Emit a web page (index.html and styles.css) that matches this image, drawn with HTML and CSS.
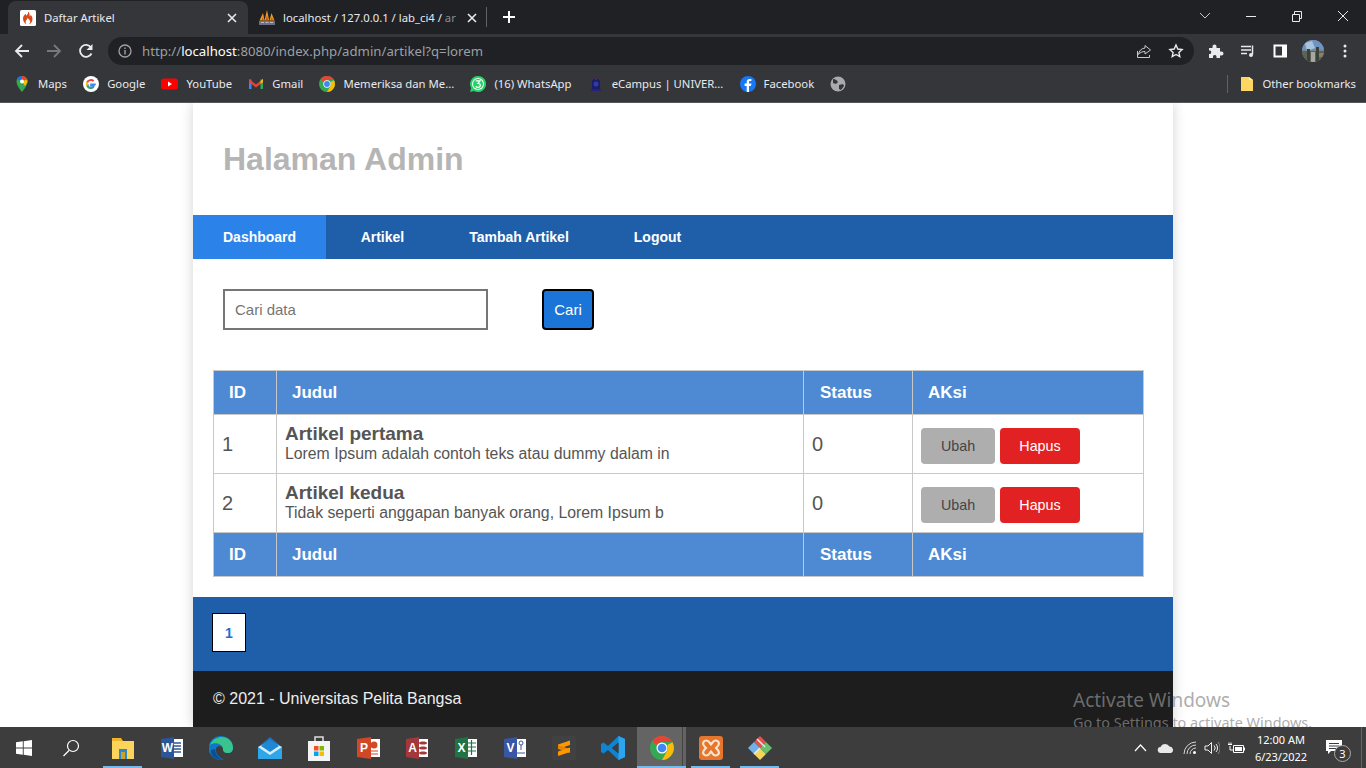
FILE: index.html
```html
<!DOCTYPE html>
<html lang="en">
<head>
<meta charset="utf-8">
<title>Daftar Artikel</title>
<link rel="stylesheet" href="styles.css">
</head>
<body>
<div class="screen">
  <div class="tabstrip">
    <div class="tab tab-active">
      <svg class="fav" width="16" height="16" viewBox="0 0 16 16"><rect width="16" height="16" rx="1.5" fill="#fff"/><path d="M8 1.500c.6 2.200-1 3-1.700 4.300-.3-.7-.5-1.200-.4-2C4 5 3 6.700 3 8.800 3 11.700 5 14 7 14.500c-1.200-1-1.700-2.300-1.200-3.500.4-.9 1.500-1.500 1.800-3 1 .8 2.700 2.300 2.600 3.800-.1 1.200-.7 2-1.500 2.700 2.200-.6 3.800-2.600 3.800-5.200 0-2-1-3.600-2-4.500 0 .9-.3 1.500-.9 1.800C9.800 4.500 9.500 2.800 8 1.500z" fill="#d8491c"/></svg>
      <span class="tab-title">Daftar Artikel</span>
      <svg class="tab-x" width="10" height="10" viewBox="0 0 10 10"><path d="M1 1l8 8M9 1l-8 8" stroke="#e8eaed" stroke-width="1.600"/></svg>
    </div>
    <div class="tab tab-idle">
      <svg class="fav" width="18" height="16" viewBox="0 0 18 16"><path d="M1.500 10.500 5 3l1.500 7.500zM6.500 10.500 9 0l2.200 10.500zM11.500 10.500 13.500 3l3 7.500z" fill="#f29a1f"/><path d="M7.800 10.500 9 5l1 5.500zM3.500 10.500 5 7l.6 3.500zM12.800 10.500 13.800 7l1.200 3.500z" fill="#b9500f"/><path d="M1 11h16v4H1z" fill="#6c7086"/><path d="M3 12.500h3M7.500 12.500h3M12 12.500h3" stroke="#b9bccb"/></svg>
      <span class="tab-title">localhost / 127.0.0.1 / lab_ci4 / <span class="tab-fade">ar</span></span>
      <svg class="tab-x" width="10" height="10" viewBox="0 0 10 10"><path d="M1 1l8 8M9 1l-8 8" stroke="#e8eaed" stroke-width="1.600"/></svg>
    </div>
    <span class="tab-sep"></span>
    <svg class="new-tab" width="14" height="14" viewBox="0 0 14 14"><path d="M7 1v12M1 7h12" stroke="#fff" stroke-width="2"/></svg>
    <div class="win-ctrls">
      <svg width="46" height="14" viewBox="0 0 46 14"><path d="M18 4l5 5 5-5" fill="none" stroke="#c8c9cb"/></svg>
      <svg width="46" height="14" viewBox="0 0 46 14"><path d="M18 7.500h10" stroke="#e8eaed"/></svg>
      <svg width="46" height="14" viewBox="0 0 46 14"><path d="M18.500 5.500h7v7h-7zM20.500 5.500v-3h7v7h-2" fill="none" stroke="#e8eaed"/></svg>
      <svg width="46" height="14" viewBox="0 0 46 14"><path d="M18 2l10 10M28 2L18 12" stroke="#e8eaed"/></svg>
    </div>
  </div>

  <div class="toolbar">
    <svg class="tool-btn" width="16" height="16" viewBox="0 0 16 16"><path d="M15 8H2M8 2 2 8l6 6" fill="none" stroke="#e8eaed" stroke-width="1.800"/></svg>
    <svg class="tool-btn" width="16" height="16" viewBox="0 0 16 16"><path d="M1 8h13M8 2l6 6-6 6" fill="none" stroke="#77787b" stroke-width="1.800"/></svg>
    <svg class="tool-btn" width="16" height="16" viewBox="0 0 16 16"><path d="M13.500 10.500A6 6 0 1 1 13 4.500" fill="none" stroke="#e8eaed" stroke-width="1.800"/><path d="M14.500 1v6h-6z" fill="#e8eaed"/></svg>
    <div class="omnibox">
      <svg class="info" width="14" height="14" viewBox="0 0 14 14"><circle cx="7" cy="7" r="6" fill="none" stroke="#a0a2a5" stroke-width="1.300"/><path d="M7 6v4.500M7 3.500v1.500" stroke="#a0a2a5" stroke-width="1.400"/></svg>
      <span class="url">http://<b class="url-host">localhost</b>:8080/index.php/admin/artikel?q=lorem</span>
      <svg class="omni-icon" width="16" height="16" viewBox="0 0 16 16"><path d="M9 2.500 14.500 7 9 11V8.500C6 8.500 4 9.500 2.500 11.500 3 8 5 5.500 9 5z" fill="none" stroke="#c8c9cb"/><path d="M1.500 8v6.500h12V12" fill="none" stroke="#c8c9cb"/></svg>
      <svg class="omni-icon" width="16" height="16" viewBox="0 0 16 16"><path d="M8 2l1.800 4 4.300.5-3.200 2.900.9 4.300L8 11.500l-3.800 2.200.9-4.300-3.200-2.900L6.200 6z" fill="none" stroke="#e8eaed" stroke-width="1.400"/></svg>
    </div>
    <svg class="tool-btn ext" width="16" height="16" viewBox="0 0 16 16"><path d="M1 5h3.500V3.500a2 2 0 0 1 4 0V5H12v3.500h1.500a2 2 0 0 1 0 4H12V15H8.500v-1.500a1.800 1.800 0 0 0-3.500 0V15H1v-4h1.200a2 2 0 0 0 0-3.500H1z" fill="#e8eaed"/></svg>
    <svg class="tool-btn" width="16" height="16" viewBox="0 0 16 16"><path d="M1 3.500h10M1 7h10M1 10.500h6" stroke="#e8eaed" stroke-width="1.400"/><path d="M12.500 2.500v9" stroke="#e8eaed" stroke-width="1.500"/><circle cx="11" cy="12" r="2" fill="#e8eaed"/></svg>
    <svg class="tool-btn" width="16" height="16" viewBox="0 0 16 16"><path d="M1.500 1.500h13.500v13H1.500z" fill="#fff"/><path d="M3.500 3.500h6.500v9H3.500z" fill="#35363a"/></svg>
    <svg class="tool-btn avatar" width="22" height="22" viewBox="0 0 22 22"><defs><clipPath id="round"><circle cx="11" cy="11" r="11"/></clipPath></defs><g clip-path="url(#round)"><path d="M0 0h22v22H0z" fill="#7b8a90"/><path d="M0 0h22v9H0z" fill="#6f94c4"/><path d="M3 3l7-2 3 7-8 3z" fill="#a9c4de"/><path d="M0 11h22v11H0z" fill="#5b6257"/><path d="M5 9h3v13H5zM14 7h3v15h-3z" fill="#3b4038"/><path d="M9 12h4v10H9z" fill="#a7a8a0"/><path d="M17 13h5v4h-5z" fill="#8b7f6c"/></g></svg>
    <svg class="tool-btn menu" width="16" height="16" viewBox="0 0 16 16"><circle cx="8" cy="3" r="1.500" fill="#e8eaed"/><circle cx="8" cy="8" r="1.500" fill="#e8eaed"/><circle cx="8" cy="13" r="1.500" fill="#e8eaed"/></svg>
  </div>

  <div class="bookmarks">
    <a class="bm"><svg width="16" height="16" viewBox="0 0 16 16"><path d="M8 0a5.500 5.500 0 0 0-5.500 5.500C2.500 10 8 16 8 16s5.500-6 5.500-10.500A5.500 5.500 0 0 0 8 0z" fill="#34a853"/><path d="M3 3.200A5.500 5.500 0 0 1 8 0v5.500z" fill="#1a73e8"/><path d="M8 0a5.500 5.500 0 0 1 5 3.200L8 5.500z" fill="#ea4335"/><path d="M13.200 3.500 13.500 6 11 10 8 5.500z" fill="#fbbc04"/><circle cx="8" cy="5.500" r="2" fill="#fff"/></svg><span class="bm-text">Maps</span></a>
    <a class="bm"><svg width="16" height="16" viewBox="0 0 16 16"><circle cx="8" cy="8" r="8" fill="#fff"/><path d="M12.800 8.300H8v1.600h2.800A3.100 3.100 0 0 1 4.900 8" fill="none" stroke="#4285f4" stroke-width="1.700"/><path d="M4.900 8c0 .4.100.8.200 1.100l-1.600 1.300A5 5 0 0 1 3 8z" fill="#34a853"/><path d="M5.100 9.200a3.100 3.100 0 0 0 4.900 1.200l1.400 1.100A5 5 0 0 1 3.500 10.400z" fill="#34a853"/><path d="M3.500 5.600 5.100 6.900A3.100 3.100 0 0 0 5 9L3.500 10.400a5 5 0 0 1 0-4.800z" fill="#fbbc05"/><path d="M3.500 5.600A5 5 0 0 1 11.300 4.500L10 5.800A3.100 3.100 0 0 0 5.100 6.900z" fill="#ea4335"/></svg><span class="bm-text">Google</span></a>
    <a class="bm"><svg width="17" height="16" viewBox="0 0 17 16"><rect x="0" y="2.500" width="17" height="11" rx="3" fill="#f00"/><path d="M7 5.500 11 8l-4 2.500z" fill="#fff"/></svg><span class="bm-text">YouTube</span></a>
    <a class="bm"><svg width="16" height="16" viewBox="0 0 16 16"><path d="M1 3.500h2.500V13H1z" fill="#4285f4"/><path d="M12.500 3.500H15V13h-2.500z" fill="#34a853"/><path d="M1 3 8 8.500 15 3v3L8 11.500 1 6z" fill="#ea4335"/><path d="M12.500 5 15 3v3l-2.500 2z" fill="#fbbc04"/></svg><span class="bm-text">Gmail</span></a>
    <a class="bm"><svg width="16" height="16" viewBox="0 0 16 16"><circle cx="8" cy="8" r="8" fill="#34a853"/><path d="M8 0a8 8 0 0 1 6.900 4H8a4 4 0 0 0-3.500 2L1.500 3.300A8 8 0 0 1 8 0z" fill="#ea4335"/><path d="M15 4.200A8 8 0 0 1 8 16l3.400-6A4 4 0 0 0 11.500 6z" fill="#fbbc05"/><circle cx="8" cy="8" r="3.700" fill="#fff"/><circle cx="8" cy="8" r="2.900" fill="#4285f4"/></svg><span class="bm-text">Memeriksa dan Me...</span></a>
    <a class="bm"><svg width="16" height="16" viewBox="0 0 16 16"><path d="M8 0a8 8 0 0 0-6.800 12.100L0 16l4-1.100A8 8 0 1 0 8 0z" fill="#25d366"/><circle cx="8" cy="8" r="6" fill="#fff"/><circle cx="8" cy="8" r="5" fill="#25d366"/><path d="M5.800 4.800h4.200L8 7.500c1.500 0 2.300.7 2.300 1.800 0 1.200-1 2-2.300 2-1 0-1.800-.4-2.300-1" fill="none" stroke="#fff" stroke-width="1.200"/></svg><span class="bm-text">(16) WhatsApp</span></a>
    <a class="bm"><svg width="16" height="16" viewBox="0 0 16 16"><path d="M8 1 4 5v9h8V5z" fill="#1c1c6b"/><circle cx="8" cy="8" r="2.500" fill="#2c3fa0"/><path d="M7 3.500 8 1.500l1 2z" fill="#b03030"/><path d="M3 13h10v2H3z" fill="#23237c"/></svg><span class="bm-text">eCampus | UNIVER...</span></a>
    <a class="bm"><svg width="16" height="16" viewBox="0 0 16 16"><circle cx="8" cy="8" r="8" fill="#1877f2"/><path d="M9 16v-6h2l.4-2.400H9V6.200c0-.8.300-1.200 1.200-1.200h1.200V3a9 9 0 0 0-1.700-.1C7.800 2.900 6.700 4 6.700 6v1.600H4.600V10h2.100v6z" fill="#fff"/></svg><span class="bm-text">Facebook</span></a>
    <a class="bm"><svg width="16" height="16" viewBox="0 0 16 16"><circle cx="8" cy="8" r="7.500" fill="#a8aaad"/><path d="M3 3c2 0 4 1 5 3L6 8 3 7zM9 9l4-1 1 2-3 4-2-1z" fill="#35363a"/></svg></a>
    <span class="bm-spacer"></span>
    <span class="bm-sep"></span>
    <a class="bm"><svg width="14" height="16" viewBox="0 0 14 16"><path d="M1 1h8l4 3v11H1z" fill="#fdd663"/><path d="M9 1v3h4z" fill="#fbeeb8"/></svg><span class="bm-text">Other bookmarks</span></a>
  </div>

  <div class="viewport">
    <div class="wrap">
      <header class="site-head"><h1 class="site-title">Halaman Admin</h1></header>
      <nav class="site-nav">
        <a class="nav-link nav-active">Dashboard</a>
        <a class="nav-link">Artikel</a>
        <a class="nav-link">Tambah Artikel</a>
        <a class="nav-link">Logout</a>
      </nav>
      <main class="content">
        <form class="search">
          <input class="search-input" type="text" placeholder="Cari data">
          <button class="search-btn" type="button">Cari</button>
        </form>
        <table class="grid">
          <thead>
            <tr><th class="c-id">ID</th><th class="c-title">Judul</th><th class="c-status">Status</th><th class="c-act">AKsi</th></tr>
          </thead>
          <tbody>
            <tr>
              <td>1</td>
              <td class="cell-title"><b class="art-name">Artikel pertama</b><p class="art-text">Lorem Ipsum adalah contoh teks atau dummy dalam in</p></td>
              <td>0</td>
              <td class="cell-act"><a class="btn btn-grey">Ubah</a><a class="btn btn-red">Hapus</a></td>
            </tr>
            <tr>
              <td>2</td>
              <td class="cell-title"><b class="art-name">Artikel kedua</b><p class="art-text">Tidak seperti anggapan banyak orang, Lorem Ipsum b</p></td>
              <td>0</td>
              <td class="cell-act"><a class="btn btn-grey">Ubah</a><a class="btn btn-red">Hapus</a></td>
            </tr>
          </tbody>
          <tfoot>
            <tr><th>ID</th><th class="c-title">Judul</th><th class="c-status">Status</th><th class="c-act">AKsi</th></tr>
          </tfoot>
        </table>
      </main>
      <div class="pager-band"><a class="page-box">1</a></div>
      <footer class="site-foot">© 2021 - Universitas Pelita Bangsa</footer>
    </div>
    <div class="activate">
      <div class="act-1">Activate Windows</div>
      <div class="act-2">Go to Settings to activate Windows.</div>
    </div>
  </div>

  <div class="taskbar">
    <div class="tb-start">
      <svg width="16" height="16" viewBox="0 0 16 16"><path d="M0 2.300 6.800 1.300V7.500H0zM7.700 1.200 16 0V7.500H7.700zM0 8.400H6.800V14.700L0 13.700zM7.700 8.400H16V16L7.700 14.800z" fill="#fff"/></svg>
    </div>
    <div class="tb-search">
      <svg width="18" height="18" viewBox="0 0 18 18"><circle cx="11" cy="7" r="5.500" fill="none" stroke="#fff" stroke-width="1.200"/><path d="M7 11.500 1.500 17" stroke="#fff" stroke-width="1.300"/></svg>
    </div>
    <div class="tb-apps">
      <div class="tb-app tb-on"><svg width="24" height="22" viewBox="0 0 24 22"><path d="M1 1h9l2 3H1z" fill="#f0b429"/><path d="M1 4h22v18H1z" fill="#fcd35b"/><path d="M8 12h8v10H8z" fill="#2b88c9"/><path d="M10 15h4v7h-4z" fill="#c9a227"/></svg></div>
      <div class="tb-app"><svg width="24" height="24" viewBox="0 0 24 24"><rect x="11" y="3" width="12" height="18" fill="#fff"/><path d="M13 7h8M13 10h8M13 13h8M13 16h8" stroke="#2b579a" stroke-width="1.300"/><path d="M1 3l13-2v22L1 21z" fill="#2b579a"/><text class="tb-letter" x="7.500" y="16">W</text></svg></div>
      <div class="tb-app"><svg width="24" height="24" viewBox="0 0 24 24"><path d="M12 0a12 12 0 0 1 12 12c0 3-2 5-5 5-4 0-5-2-5-4 0-3-4-4-6-2C5 14 8 21 15 23.500A12 12 0 1 1 12 0z" fill="#0c78c8"/><path d="M1 9C3 3 9 1 13 1c6 0 11 4 11 11 0 3-2 5-5 5-3 0-5-1-5-4 0-5-8-8-13-4z" fill="#38c48c"/><path d="M2 14C1 20 7 24 14 24c-4-2-8-6-8-11z" fill="#0a4f95"/></svg></div>
      <div class="tb-app"><svg width="24" height="24" viewBox="0 0 24 24"><path d="M12 1 0 11v12h24V11z" fill="#1e6fb8"/><path d="M0 11h24v12H0z" fill="#2ea7ea"/><path d="M0 11l12 8 12-8-12-6z" fill="#d4eefc"/><path d="M3 10 12 3l9 7-9 6z" fill="#1e88d4"/></svg></div>
      <div class="tb-app"><svg width="24" height="26" viewBox="0 0 24 26"><path d="M8 6V2h8v4" fill="none" stroke="#ddd" stroke-width="1.500"/><path d="M1 6h22v20H1z" fill="#f4f4f4"/><path d="M7 11h4.500v4.500H7z" fill="#f25022"/><path d="M12.500 11H17v4.500h-4.500z" fill="#7fba00"/><path d="M7 16.500h4.500V21H7z" fill="#00a4ef"/><path d="M12.500 16.500H17V21h-4.500z" fill="#ffb900"/></svg></div>
      <div class="tb-app"><svg width="24" height="24" viewBox="0 0 24 24"><rect x="12" y="3" width="12" height="18" fill="#fff"/><circle cx="18" cy="9" r="3.500" fill="#d24726"/><path d="M14 15h8M14 18h8" stroke="#d24726"/><path d="M1 3l14-2v22L1 21z" fill="#d24726"/><text class="tb-letter" x="8" y="16">P</text></svg></div>
      <div class="tb-app"><svg width="24" height="24" viewBox="0 0 24 24"><rect x="11" y="3" width="12" height="18" fill="#fff"/><path d="M14 7c0-2 8-2 8 0s-8 2-8 0zM14 12c0-2 8-2 8 0s-8 2-8 0zM14 17c0-2 8-2 8 0s-8 2-8 0z" fill="#a4373a"/><path d="M1 3l13-2v22L1 21z" fill="#a4373a"/><text class="tb-letter" x="7.500" y="16">A</text></svg></div>
      <div class="tb-app"><svg width="24" height="24" viewBox="0 0 24 24"><rect x="11" y="3" width="12" height="18" fill="#fff"/><path d="M13 7h9M13 11h9M13 15h9M17.500 4v15" stroke="#217346" stroke-width="1.200"/><path d="M1 3l13-2v22L1 21z" fill="#217346"/><text class="tb-letter" x="7.500" y="16">X</text></svg></div>
      <div class="tb-app"><svg width="24" height="24" viewBox="0 0 24 24"><rect x="11" y="3" width="12" height="18" fill="#fff"/><circle cx="18" cy="7" r="2" fill="none" stroke="#3955a3"/><path d="M18 9v5M14 17h8" stroke="#3955a3"/><path d="M1 3l13-2v22L1 21z" fill="#3955a3"/><text class="tb-letter" x="7.500" y="16">V</text></svg></div>
      <div class="tb-app"><svg width="24" height="24" viewBox="0 0 24 24"><rect width="24" height="24" rx="2" fill="#414141"/><path d="M6 8.500 18 4.500v4.500L6 13z" fill="#ff9800"/><path d="M6 9 18 13v4L6 13z" fill="#e58600"/><path d="M6 15.500 18 11.500V16L6 20z" fill="#ff9800"/></svg></div>
      <div class="tb-app"><svg width="24" height="24" viewBox="0 0 24 24"><path d="M17.500 0 24 3v18l-6.500 3L7 14 2.500 17.500 0 16V8l2.500-1.500L7 10zM17.500 6.500 11 12l6.500 5.500z" fill="#0e85d4"/><path d="M17.500 0 24 3v18l-6.500 3z" fill="#2ba5ef"/><path d="M17.500 6.500V17.500L11 12z" fill="#3d3d3d"/></svg></div>
      <div class="tb-app tb-on tb-cur"><svg width="24" height="24" viewBox="0 0 16 16"><circle cx="8" cy="8" r="8" fill="#34a853"/><path d="M8 0a8 8 0 0 1 6.900 4H8a4 4 0 0 0-3.500 2L1.500 3.300A8 8 0 0 1 8 0z" fill="#ea4335"/><path d="M15 4.200A8 8 0 0 1 8 16l3.400-6A4 4 0 0 0 11.500 6z" fill="#fbbc05"/><circle cx="8" cy="8" r="3.700" fill="#fff"/><circle cx="8" cy="8" r="2.900" fill="#4285f4"/></svg></div>
      <div class="tb-app tb-on"><svg width="24" height="24" viewBox="0 0 24 24"><rect width="24" height="24" rx="3" fill="#e5762c"/><path d="M7.500 4.500c-3 0-4 2.500-3 4.500 1 1.500 2.500 3 2.500 3s-1.500 1.500-2.500 3c-1 2 0 4.500 3 4.500 2.500 0 3-2.500 4.500-4 1.500 1.500 2 4 4.500 4 3 0 4-2.500 3-4.500-1-1.500-2.500-3-2.500-3s1.500-1.500 2.500-3c1-2 0-4.500-3-4.500-2.500 0-3 2.500-4.500 4-1.500-1.500-2-4-4.500-4z" fill="none" stroke="#fbe3cd" stroke-width="2.200"/></svg></div>
      <div class="tb-app tb-on"><svg width="24" height="24" viewBox="0 0 24 24"><path d="M12 12 6 18l6 6 6-6z" fill="#f2d75b"/><path d="M12 0 6 6l6 6 6-6z" fill="#e0534f"/><path d="M0 12l6-6 6 6-6 6z" fill="#6fb1e8"/><path d="M12 12l6-6 6 6-6 6z" fill="#6abf69"/><path d="M9 3l8 8M6 18l6-6" stroke="#e8e8e8" stroke-width="1.500"/></svg></div>
    </div>
    <div class="tray">
      <svg class="tr-ic tr-chev" width="13" height="8" viewBox="0 0 13 8"><path d="M1 7l5.500-6L12 7" fill="none" stroke="#fff" stroke-width="1.200"/></svg>
      <svg class="tr-ic tr-cloud" width="17" height="10" viewBox="0 0 17 10"><path d="M4 10a3 3 0 0 1-.500-6A5 5 0 0 1 12.500 3.500 3.400 3.400 0 0 1 14 10z" fill="#e8e8e8"/></svg>
      <svg class="tr-ic tr-wifi" width="14" height="14" viewBox="0 0 14 14"><path d="M1 13A12 12 0 0 1 13 1M4 13a9 9 0 0 1 9-9M7 13a6 6 0 0 1 6-6" fill="none" stroke="#d5d5d5"/><circle cx="11.500" cy="11.500" r="1.500" fill="#fff"/></svg>
      <svg class="tr-ic tr-vol" width="16" height="14" viewBox="0 0 16 14"><path d="M1 5h3l3.500-3.500v11L4 9H1zM10 4.500a3.500 3.500 0 0 1 0 5M12 3a6 6 0 0 1 0 8" fill="none" stroke="#f0f0f0"/><path d="M14 1a9 9 0 0 1 0 12" fill="none" stroke="#8a8a8a"/></svg>
      <svg class="tr-ic tr-batt" width="17" height="12" viewBox="0 0 17 12"><path d="M5.500 3.500h10v7h-10z" fill="none" stroke="#fff"/><path d="M7 5h7v4H7zM16 5.500h1v3h-1z" fill="#fff"/><path d="M0 2.500h4M1 .5v2M3 .5v2M2 4v4h3" fill="none" stroke="#fff"/></svg>
      <div class="clock"><span>12:00 AM</span><span>6/23/2022</span></div>
      <div class="notif">
        <svg width="16" height="15" viewBox="0 0 16 15"><path d="M0 0h16v11H5l-3 3v-3H0z" fill="#fff"/><path d="M3 3.500h10M3 6h10M3 8.500h7" stroke="#3a3a3a"/></svg>
        <span class="notif-badge">3</span>
      </div>
      <span class="tb-end"></span>
    </div>
  </div>
</div>
</body>
</html>
```
FILE: styles.css
```css
* { box-sizing: border-box; }
html, body { margin: 0; padding: 0; background: #fff; }
.screen { width: 1366px; height: 768px; display: flex; flex-direction: column; overflow: hidden; font-family: "Liberation Sans", Arial, sans-serif; }

/* Browser chrome */
.tabstrip { height: 34px; background: #202124; display: flex; align-items: flex-end; padding-left: 8px; flex: none; color: #e8eaed; font: 11.300px "Noto Sans", sans-serif; }
.tab { height: 33px; display: flex; align-items: center; flex: none; }
.tab-active { width: 240px; background: #35363a; border-radius: 8px 8px 0 0; padding: 0 11px 0 12px; }
.tab-idle { width: 230px; padding: 0 1px 0 10px; }
.fav { flex: none; }
.tab-title { margin-left: 8px; flex: 1; white-space: nowrap; }
.tab-idle .tab-title { margin-left: 7px; }
.tab-fade { color: #8a8c90; }
.tab-x { flex: none; margin-left: 6px; }
.tab-sep { width: 1px; height: 20px; background: #5f6368; margin: 0 0 7px 8px; flex: none; }
.new-tab { margin: 0 0 10px 15px; flex: none; }
.win-ctrls { margin: 0 0 11px auto; display: flex; }
.win-ctrls svg { display: block; }

.toolbar { height: 34px; background: #35363a; display: flex; align-items: center; padding: 0 14px; gap: 16px; flex: none; }
.tool-btn { flex: none; }
.omnibox { flex: none; width: 1086px; height: 28px; margin-left: -2px; background: #202124; border-radius: 14px; display: flex; align-items: center; padding: 0 10px; }
.info { flex: none; }
.url { margin-left: 10px; flex: 1; color: #9aa0a6; font: 13.200px "Noto Sans", sans-serif; white-space: nowrap; }
.url-host { color: #fff; font-weight: 400; }
.omni-icon { flex: none; margin-left: 16px; }
.ext { margin-left: -2px; }
.avatar { margin-left: -2px; }
.menu { margin-left: -3px; }

.bookmarks { height: 35px; background: #35363a; border-bottom: 1px solid #55565a; display: flex; align-items: center; padding: 0 10px 3px 14px; gap: 16.200px; flex: none; }
.bm { display: flex; align-items: center; gap: 8px; flex: none; }
.bm svg { flex: none; }
.bm-text { color: #e8eaed; font: 11.300px "Noto Sans", sans-serif; white-space: nowrap; }
.bm-spacer { flex: 1; }
.bm-sep { width: 1px; height: 18px; background: #5f6368; flex: none; margin-right: -4px; }

/* Page */
.viewport { flex: 1; min-height: 0; position: relative; background: #fff; overflow: hidden; }
.wrap { width: 980px; height: 100%; margin: 0 auto; background: #fff; box-shadow: 0 0 12px rgba(0, 0, 0, .18); display: flex; flex-direction: column; }
.site-head { height: 112px; padding: 0 30px; display: flex; align-items: center; flex: none; }
.site-title { margin: 0; color: #b5b5b5; font-size: 32px; line-height: 1; font-weight: 700; }
.site-nav { height: 44px; background: #1f5fa9; display: flex; flex: none; }
.nav-link { padding: 0 32.500px; line-height: 44px; color: #fff; font-size: 14px; font-weight: 700; }
.nav-active { background: #2b83ea; padding: 0 30px; margin-right: 2px; }
.content { flex: 1; padding: 30px 29px 0 20px; }
.search { display: flex; margin: 0 0 40px 10px; }
.search-input { width: 265px; height: 41px; border: 2px solid #767676; padding: 0 10px; font: 15px "Liberation Sans", sans-serif; color: #333; outline: 0; border-radius: 0; }
.search-input::placeholder { color: #757575; opacity: 1; }
.search-btn { width: 52px; height: 41px; margin-left: 54px; background: #1b74d8; border: 2px solid #000; border-radius: 4px; color: #fff; font: 15px "Liberation Sans", sans-serif; padding: 0; }
.grid { width: 931px; border-collapse: collapse; table-layout: fixed; color: #555; }
.grid th, .grid td { border: 1px solid #c8c8c8; }
.grid th { background: #4e8ad4; color: #fff; height: 44px; text-align: left; padding: 0 15px; font-size: 17px; font-weight: 700; }
.grid .c-status { padding-left: 16px; }
.grid td { height: 59px; padding: 0 8px; font-size: 20px; vertical-align: middle; }
.c-id { width: 63px; }
.c-title { width: 527px; }
.c-status { width: 109px; }
.art-name { display: block; font-size: 19px; line-height: 17px; }
.art-text { margin: 1px 0 0; font-size: 15.800px; line-height: 21px; }
.grid .cell-act { font-size: 14.300px; padding: 4px 8px 0; }
.btn { display: inline-flex; align-items: center; justify-content: center; height: 36px; border-radius: 4px; vertical-align: middle; }
.btn-grey { width: 74px; background: #aeaeae; color: #444; margin-right: 5px; }
.btn-red { width: 80px; background: #e22222; color: #fff; }
.pager-band { height: 74px; background: #1f5fa9; padding: 16px 19px; flex: none; }
.page-box { display: flex; align-items: center; justify-content: center; width: 34px; height: 39px; background: #fff; border: 1px solid #000; color: #1c6fd0; font-size: 14px; font-weight: 700; }
.site-foot { height: 56px; background: #1d1d1d; color: #eee; padding: 0 20px; line-height: 56px; font-size: 16px; flex: none; }
.activate { position: absolute; left: 1073px; top: 585px; color: rgba(140, 140, 140, .72); font-family: "Noto Sans", sans-serif; white-space: nowrap; }
.act-1 { font-size: 19px; line-height: 24px; }
.act-2 { font-size: 14.450px; line-height: 22px; }

/* Taskbar */
.taskbar { height: 41px; background: #3d3d3d; display: flex; align-items: center; flex: none; position: relative; color: #fff; }
.tb-start { width: 47px; display: flex; justify-content: center; flex: none; }
.tb-search { width: 48px; display: flex; justify-content: center; flex: none; }
.tb-apps { display: flex; height: 100%; margin-left: 3px; flex: none; }
.tb-app { width: 49px; height: 100%; display: flex; align-items: center; justify-content: center; position: relative; }
.tb-on::after { content: ""; position: absolute; left: 5px; right: 5px; bottom: 0; height: 2px; background: #76b9ed; }
.tb-cur { background: #646464; }
.tb-cur::after { left: 0; right: 0; }
.tb-cur::before { content: ""; position: absolute; left: 45px; top: 0; bottom: 2px; width: 1px; background: #444; }
.tb-letter { fill: #fff; font: 700 12px "Liberation Sans", sans-serif; text-anchor: middle; }
.tray { margin-left: auto; display: flex; align-items: center; height: 100%; }
.tr-ic { flex: none; }
.tr-chev { margin-right: 10px; }
.tr-cloud { margin-right: 9px; }
.tr-wifi { margin-right: 7px; }
.tr-vol { margin-right: 8px; }
.tr-batt { margin-right: 4px; }
.clock { width: 64px; display: flex; flex-direction: column; align-items: center; font: 11px/17px "Noto Sans", sans-serif; }
.notif { width: 42px; position: relative; display: flex; justify-content: center; }
.notif-badge { position: absolute; left: 21px; top: 5px; width: 17px; height: 17px; border-radius: 50%; border: 1px solid #aaa; background: #3d3d3d; font: 11px/15px "Noto Sans", sans-serif; text-align: center; }
.tb-end { width: 1px; height: 100%; background: #666; margin-left: 6px; margin-right: 4px; }
```
